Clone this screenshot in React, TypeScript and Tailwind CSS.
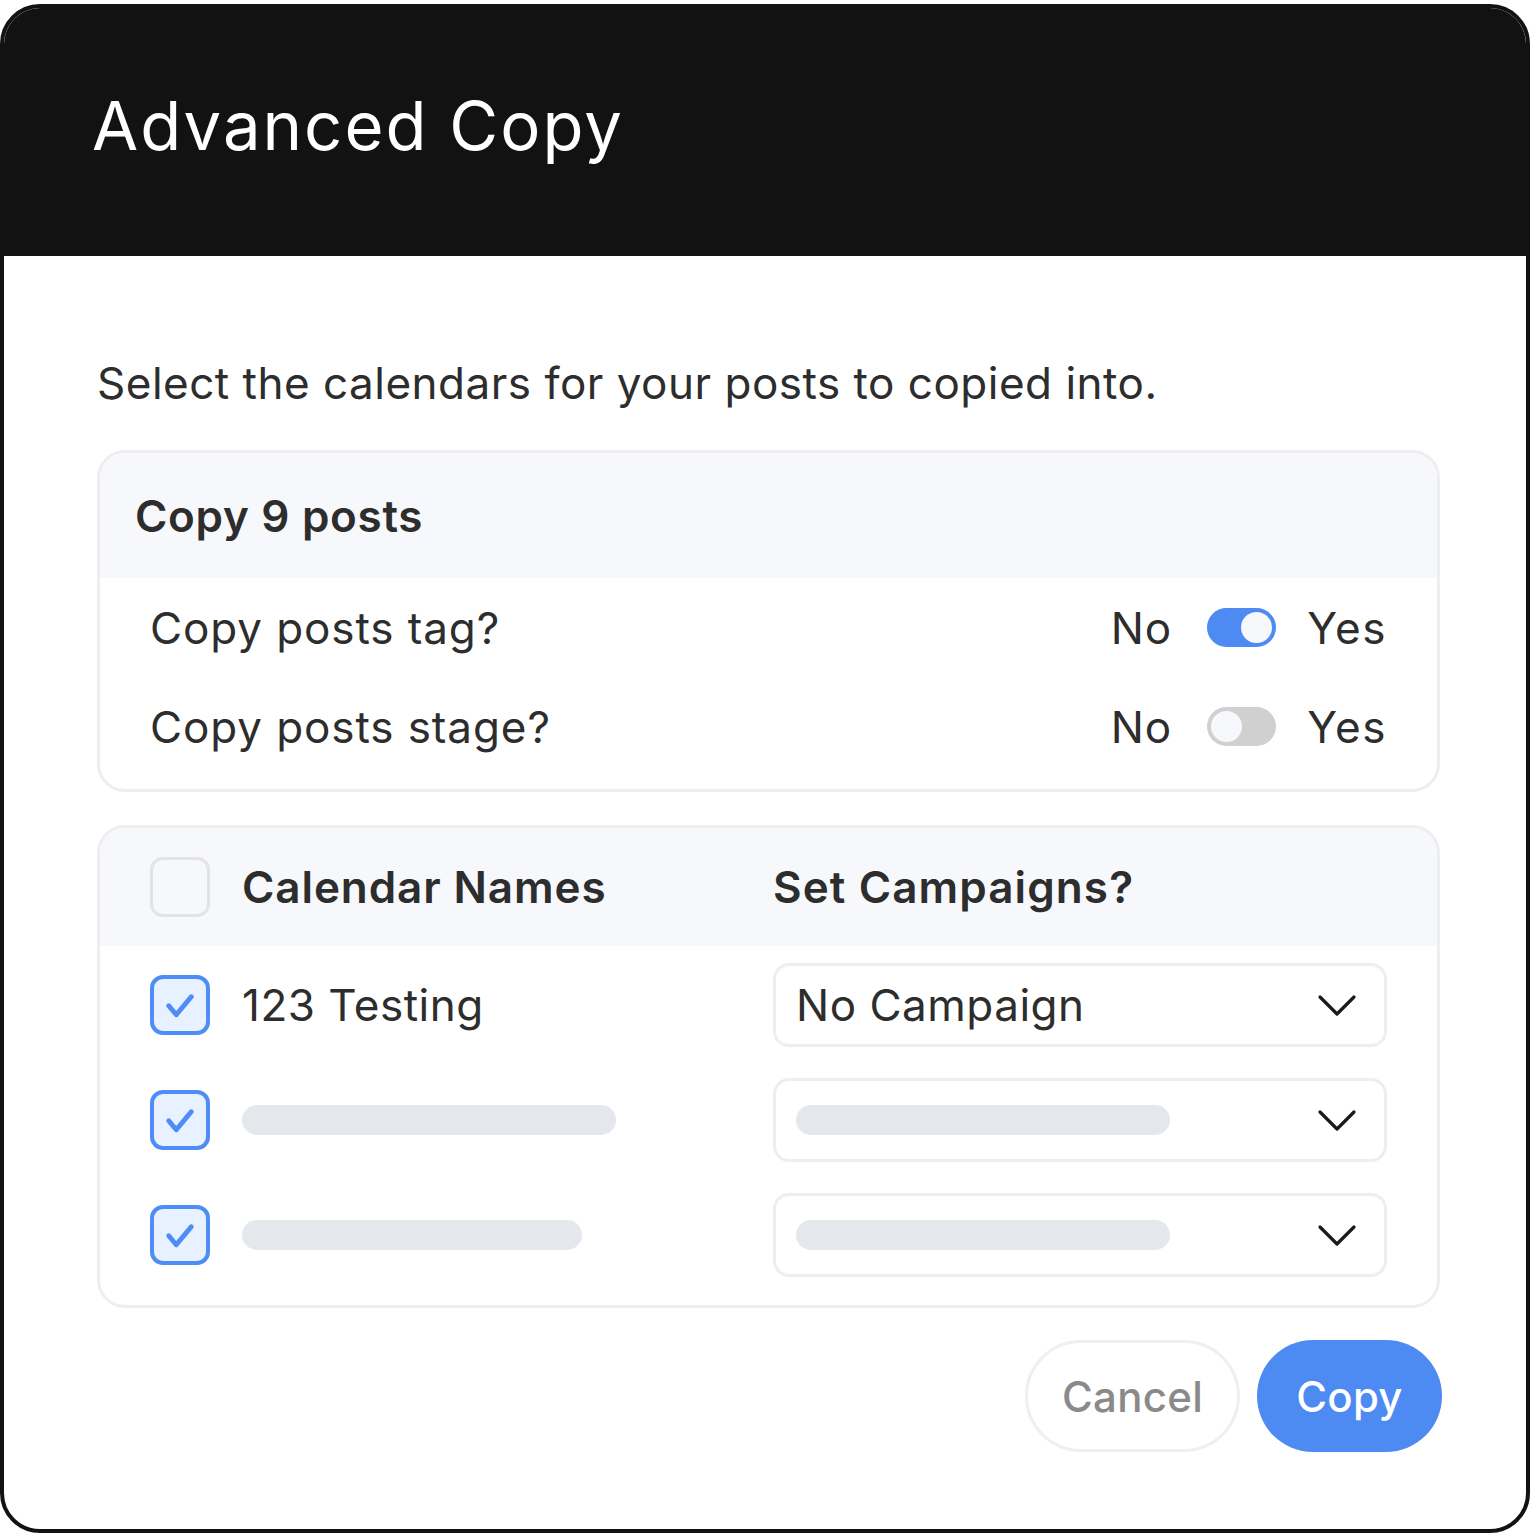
import React, { useState } from 'react';

const font = "font-['Inter','Liberation_Sans',sans-serif]";

const Toggle = ({ on, onClick }: { on: boolean; onClick: () => void }) => (
  <button
    type="button"
    onClick={onClick}
    className={`w-[69px] h-[39px] rounded-full p-[4px] flex items-center ${on ? 'bg-[#4d8af2] justify-end' : 'bg-[#d0d0d0] justify-start'}`}
  >
    <span className="block w-[31px] h-[31px] rounded-full bg-[#f7f8fc]" />
  </button>
);

const CheckBox = ({ checked }: { checked: boolean }) =>
  checked ? (
    <div className="w-[60px] h-[60px] rounded-[13px] border-[4px] border-[#4f8cf5] bg-[#e8f1ff] flex items-center justify-center shrink-0">
      <svg width="36" height="36" viewBox="0 0 24 24" fill="none" stroke="#4f8cf5" strokeWidth="3.3" strokeLinecap="round" strokeLinejoin="round">
        <polyline points="4.5 12.5 9.5 18.5 19.5 6.5" />
      </svg>
    </div>
  ) : (
    <div className="w-[60px] h-[60px] rounded-[13px] border-[3px] border-[#e3e3e3] bg-[#f7f8fc] shrink-0" />
  );

const Chevron = () => (
  <svg width="40" height="24" viewBox="0 0 40 24" fill="none" stroke="#1a1a1a" strokeWidth="3.2" strokeLinecap="round" strokeLinejoin="round">
    <polyline points="3 4 20 21 37 4" />
  </svg>
);

const rows = [
  { name: '123 Testing', campaign: 'No Campaign', bar: 0 },
  { name: '', campaign: '', bar: 374 },
  { name: '', campaign: '', bar: 340 },
];

export default function App() {
  const [tag, setTag] = useState(true);
  const [stage, setStage] = useState(false);

  return (
    <div className={`w-[1534px] h-[1534px] bg-white pt-[4px] ${font} text-[#2d2d2d]`}>
      <div className="w-[1530px] h-[1529px] border-[4px] border-[#121212] rounded-[40px] overflow-hidden flex flex-col bg-white">
        <div className="h-[248px] shrink-0 bg-[#121212] pl-[88px] pt-[78px]">
          <h1 className="text-white text-[67px] leading-[80px] font-normal tracking-[2px]">
            Advanced Copy
          </h1>
        </div>

        <div className="flex-1 pl-[93px] pr-[86px] flex flex-col">
          <p className="pt-[102px] text-[44px] leading-[50px] tracking-[0.5px] text-[#2d2d2d]">
            Select the calendars for your posts to copied into.
          </p>

          <div className="mt-[42px] border-[3px] border-[#eeeeee] rounded-[28px] overflow-hidden">
            <div className="h-[125px] bg-[#f7f8fc] pl-[35px] flex items-center">
              <span className="text-[44px] font-semibold tracking-[0.7px]">Copy 9 posts</span>
            </div>
            <div className="pb-[13px]">
              {[
                { label: 'Copy posts tag?', on: tag, set: () => setTag(!tag) },
                { label: 'Copy posts stage?', on: stage, set: () => setStage(!stage) },
              ].map((r) => (
                <div key={r.label} className="h-[99px] pl-[50px] pr-[50px] flex items-center justify-between">
                  <span className="text-[44px] tracking-[0.9px]">{r.label}</span>
                  <div className="flex items-center">
                    <span className="text-[44px] tracking-[0.9px] mr-[35px]">No</span>
                    <Toggle on={r.on} onClick={r.set} />
                    <span className="text-[44px] tracking-[1.5px] ml-[31px]">Yes</span>
                  </div>
                </div>
              ))}
            </div>
          </div>

          <div className="mt-[33px] border-[3px] border-[#eeeeee] rounded-[28px] overflow-hidden">
            <div className="h-[118px] bg-[#f7f8fc] pl-[50px] flex items-center">
              <div className="w-[623px] flex items-center gap-[32px]">
                <CheckBox checked={false} />
                <span className="text-[44px] font-semibold tracking-[0.9px]">Calendar Names</span>
              </div>
              <span className="text-[44px] font-semibold tracking-[1.1px]">Set Campaigns?</span>
            </div>
            <div className="pt-[17px] pb-[28px] pl-[50px] pr-[50px] flex flex-col gap-[31px]">
              {rows.map((r, i) => (
                <div key={i} className="h-[84px] flex items-center">
                  <div className="w-[623px] flex items-center gap-[32px]">
                    <CheckBox checked />
                    {r.name ? (
                      <span className="text-[44px] tracking-[0.5px]">{r.name}</span>
                    ) : (
                      <div className="h-[30px] rounded-full bg-[#e4e7ec]" style={{ width: r.bar }} />
                    )}
                  </div>
                  <div className="flex-1 h-full border-[3px] border-[#eeeeee] rounded-[16px] pl-[20px] pr-[27px] flex items-center justify-between">
                    {r.campaign ? (
                      <span className="text-[44px] tracking-[0.5px]">{r.campaign}</span>
                    ) : (
                      <div className="w-[374px] h-[30px] rounded-full bg-[#e4e7ec]" />
                    )}
                    <Chevron />
                  </div>
                </div>
              ))}
            </div>
          </div>

          <div className="mt-[32px] flex justify-end gap-[17px] -mr-[2px]">
            <button className="w-[215px] h-[112px] rounded-full border-[3px] border-[#efefef] text-[42px] font-medium text-[#8a8a8a] tracking-[0.3px]">
              Cancel
            </button>
            <button className="w-[185px] h-[112px] rounded-full bg-[#4d8af2] text-[42px] font-medium text-white tracking-[0.3px]">
              Copy
            </button>
          </div>
        </div>
      </div>
    </div>
  );
}
